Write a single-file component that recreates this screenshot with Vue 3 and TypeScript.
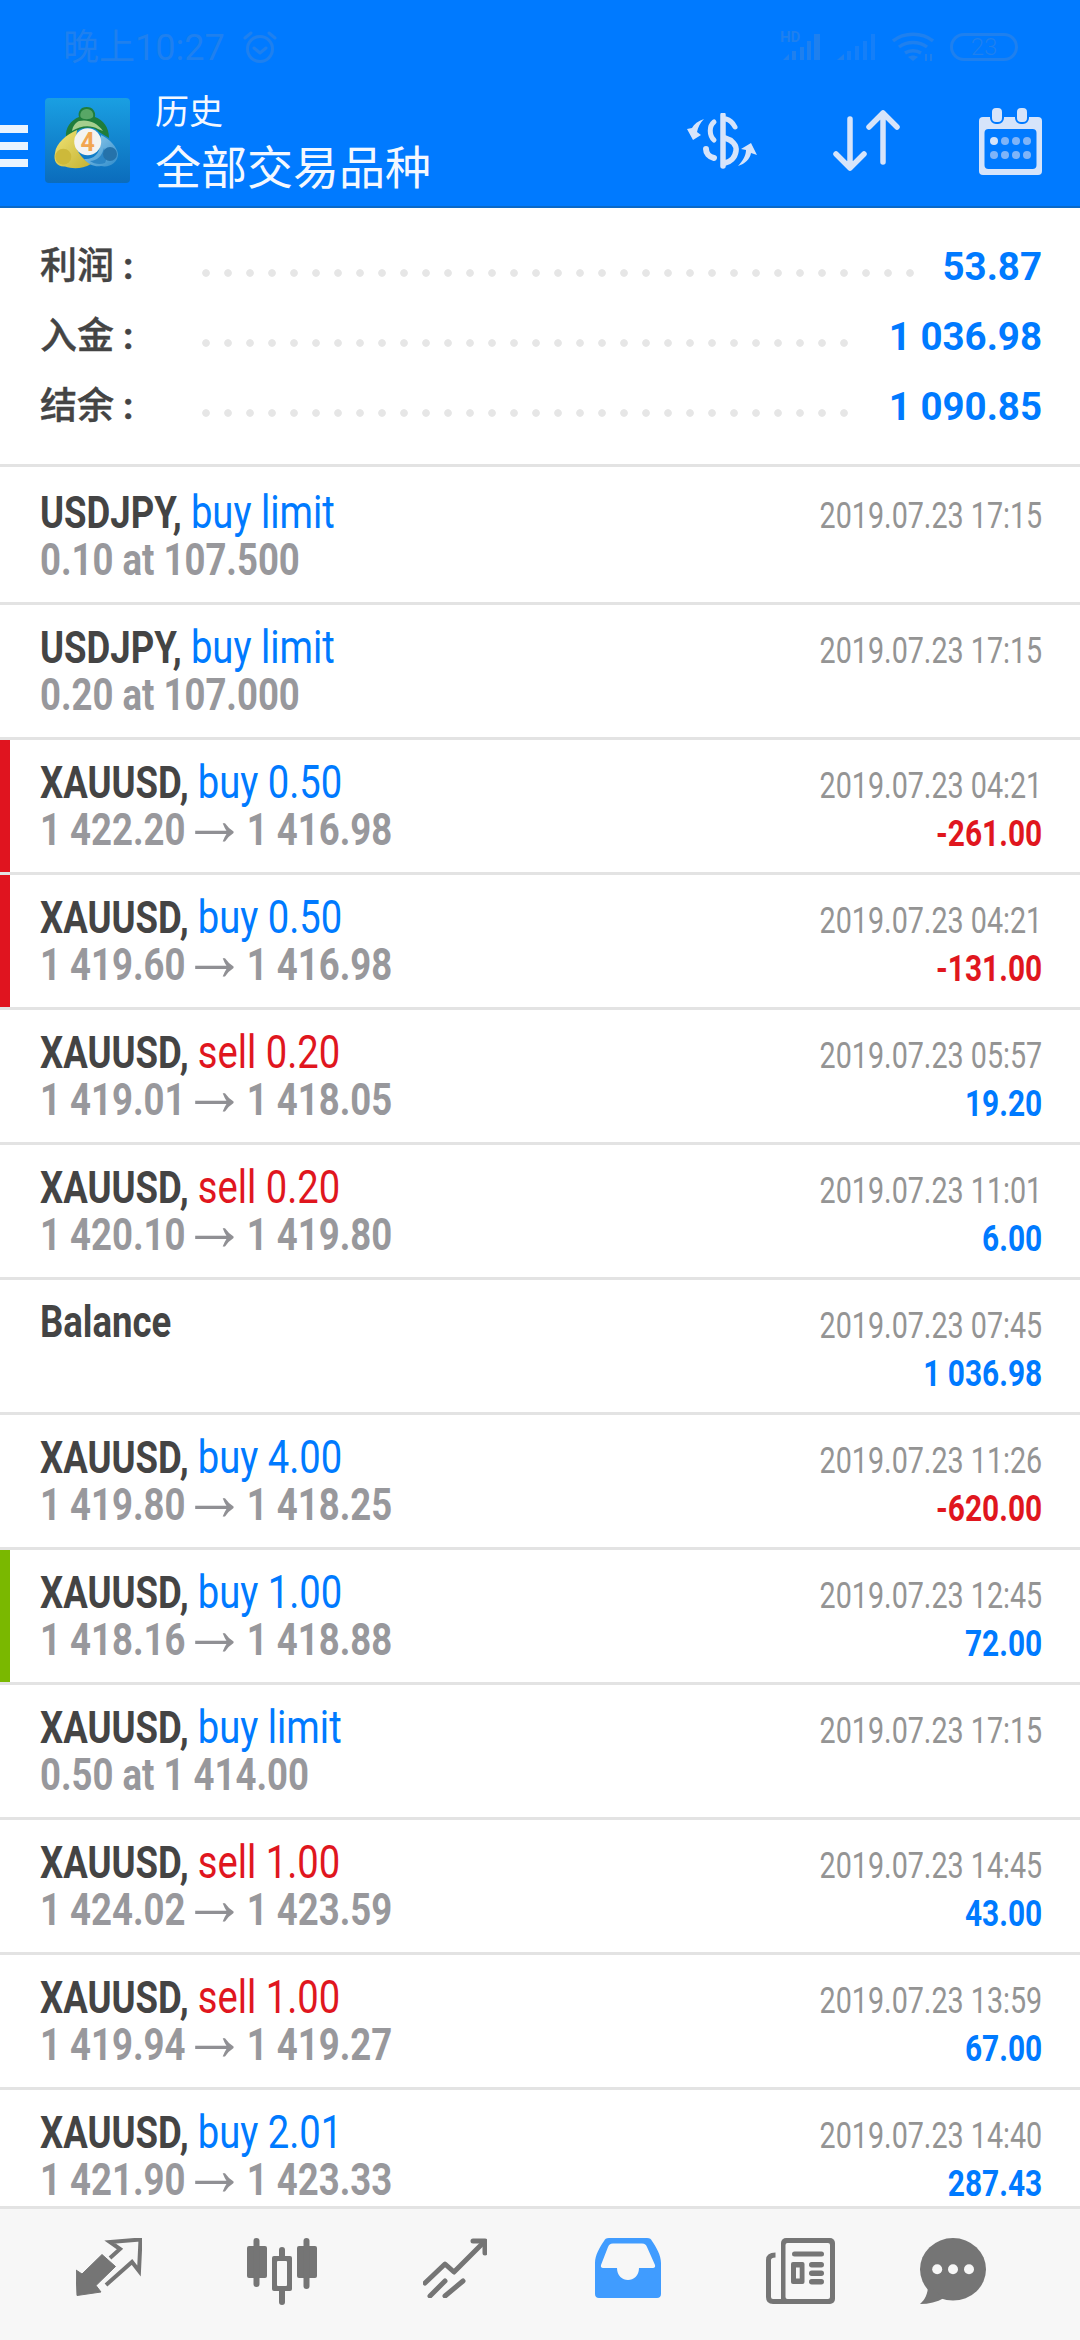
<script setup lang="ts">
interface Row {
  name: string;
  action?: string;
  kind?: 'buy' | 'sell';
  from?: string;
  to?: string;
  sub?: string;
  date: string;
  profit?: string;
  bar?: 'red' | 'green';
}

const summary = [
  { label: '利润', value: '53.87', dots: 33 },
  { label: '入金', value: '1 036.98', dots: 30 },
  { label: '结余', value: '1 090.85', dots: 30 },
];

const rows: Row[] = [
  { name: 'USDJPY', action: 'buy limit', kind: 'buy', sub: '0.10 at 107.500', date: '2019.07.23 17:15' },
  { name: 'USDJPY', action: 'buy limit', kind: 'buy', sub: '0.20 at 107.000', date: '2019.07.23 17:15' },
  { name: 'XAUUSD', action: 'buy 0.50', kind: 'buy', from: '1 422.20', to: '1 416.98', date: '2019.07.23 04:21', profit: '-261.00', bar: 'red' },
  { name: 'XAUUSD', action: 'buy 0.50', kind: 'buy', from: '1 419.60', to: '1 416.98', date: '2019.07.23 04:21', profit: '-131.00', bar: 'red' },
  { name: 'XAUUSD', action: 'sell 0.20', kind: 'sell', from: '1 419.01', to: '1 418.05', date: '2019.07.23 05:57', profit: '19.20' },
  { name: 'XAUUSD', action: 'sell 0.20', kind: 'sell', from: '1 420.10', to: '1 419.80', date: '2019.07.23 11:01', profit: '6.00' },
  { name: 'Balance', date: '2019.07.23 07:45', profit: '1 036.98' },
  { name: 'XAUUSD', action: 'buy 4.00', kind: 'buy', from: '1 419.80', to: '1 418.25', date: '2019.07.23 11:26', profit: '-620.00' },
  { name: 'XAUUSD', action: 'buy 1.00', kind: 'buy', from: '1 418.16', to: '1 418.88', date: '2019.07.23 12:45', profit: '72.00', bar: 'green' },
  { name: 'XAUUSD', action: 'buy limit', kind: 'buy', sub: '0.50 at 1 414.00', date: '2019.07.23 17:15' },
  { name: 'XAUUSD', action: 'sell 1.00', kind: 'sell', from: '1 424.02', to: '1 423.59', date: '2019.07.23 14:45', profit: '43.00' },
  { name: 'XAUUSD', action: 'sell 1.00', kind: 'sell', from: '1 419.94', to: '1 419.27', date: '2019.07.23 13:59', profit: '67.00' },
  { name: 'XAUUSD', action: 'buy 2.01', kind: 'buy', from: '1 421.90', to: '1 423.33', date: '2019.07.23 14:40', profit: '287.43' },
];
</script>

<template>
  <div class="screen">
    <header class="header">
      <div class="status">
        <span class="time">晚上10:27</span>
        <svg class="alarm" width="34" height="34" viewBox="0 0 34 34" fill="none" stroke="#1f80ee" stroke-width="3">
          <circle cx="17" cy="19" r="12.5" />
          <path d="M11 18l6 5 6-5" stroke-linecap="round" stroke-linejoin="round" />
          <path d="M2 8l6-5M32 8l-6-5" stroke-linecap="round" />
        </svg>
        <div class="status-right">
          <svg class="sig1" width="42" height="36" viewBox="0 -6 42 36" fill="#1f80ee">
            <text x="-1" y="10" font-family="Roboto, sans-serif" font-weight="700" font-size="15">HD</text>
            <path d="M2 28l6-6v6zM11 19h4v9h-4zM19 15h4v13h-4zM26 9h4v19h-4zM33 2h6v26h-6z" />
          </svg>
          <svg class="sig2" width="40" height="30" viewBox="0 0 40 30" fill="#157ff8">
            <path d="M0 28l7-6v6z" fill="#1f80ee" />
            <path d="M10 19h4v9h-4zM18 14h4v14h-4zM26 9h4v19h-4zM34 2h4v26h-4z" />
          </svg>
          <svg class="wifi" width="42" height="30" viewBox="0 0 42 30" fill="none" stroke="#1f80ee" stroke-width="3.4">
            <path d="M1 9c11-9 29-9 40 0M7 15c8-6 20-6 28 0M13 21c4.500-3 11.500-3 16 0" />
            <path d="M21 29l-5-4c3-2 7-2 10 0z" fill="#1f80ee" stroke="none" />
            <path d="M34 22v7M39 22v7" stroke-width="2" />
          </svg>
          <div class="battery">23</div>
        </div>
      </div>
      <div class="toolbar">
        <div class="burger"><i></i><i></i><i></i></div>
        <svg class="logo" width="85" height="85" viewBox="0 0 85 85">
          <defs>
            <linearGradient id="lb" x1="0" y1="0" x2="0" y2="1">
              <stop offset="0" stop-color="#1a9fe2" />
              <stop offset="1" stop-color="#0b6cbc" />
            </linearGradient>
            <linearGradient id="ly" x1="0" y1="0" x2="1" y2="1">
              <stop offset="0" stop-color="#f1e476" />
              <stop offset="1" stop-color="#c4b232" />
            </linearGradient>
            <linearGradient id="lc" x1="0" y1="0" x2="1" y2="1">
              <stop offset="0" stop-color="#9ad0ee" />
              <stop offset="1" stop-color="#2f8ccb" />
            </linearGradient>
          </defs>
          <rect width="85" height="85" rx="4" fill="url(#lb)" />
          <path d="M41.700 9C48 9 51 14 50 19C58 22 64 29 64 40L54 34C50 28 34 28 28 36L21 39C20 30 26 22 34 19C32.500 14 35.500 9 41.700 9Z" fill="#1f7d3c" />
          <path d="M41.700 11C46.500 11 49 15 48 19C45 22 38 22 35.500 19C34.500 15 37 11 41.700 11Z" fill="#58a766" />
          <path d="M34 23C42 21 52 24 58 33L53 31C46 27 36 27 27 33C28 28 30 25 34 23Z" fill="#a5cf8e" />
          <path d="M32 32C21 37 11 45 10 55C8 63 12 69 20 68.500C28 71 37 71 46 66C38 62 32 54 30 46Z" fill="url(#ly)" />
          <circle cx="18.300" cy="58.700" r="8" fill="#cdb93a" />
          <path d="M56 37C65 41 72 49 73 56C73 65 64 70 56 68C50 69 44 67 39 61C48 62 54 56 55 48Z" fill="url(#lc)" />
          <path d="M45 63C52 63 57 58 59 50C61 56 62 62 60 65C55 67 49 66 45 63Z" fill="#2c86c6" />
          <circle cx="65" cy="56" r="7" fill="#2572aa" />
          <circle cx="42.700" cy="43.700" r="13.500" fill="#f3f3f1" />
          <text x="42.700" y="52.500" text-anchor="middle" font-family="Roboto, sans-serif" font-weight="700" font-size="25" fill="#f2a650">4</text>
        </svg>
        <div class="titles">
          <div class="title-small">历史</div>
          <div class="title-big">全部交易品种</div>
        </div>
        <div class="actions">
          <svg class="a-money" width="72" height="56" viewBox="0 0 72 56" fill="#d6e4fa">
            <g fill="none" stroke="#d6e4fa" stroke-linecap="round">
              <path d="M36 2v51" stroke-width="5.500" />
              <path d="M39 6c4 1 7 4 9 8" stroke-width="5" />
              <path d="M27 9c-5 4-5 13 0 18" stroke-width="5" />
              <path d="M38 25C45 27 50 32 49 38C48 45 43 49 38 50" stroke-width="5.500" />
              <path d="M19 36c0 4 3 8 8 9" stroke-width="6" />
            </g>
            <path d="M17 6C11 8 7 11 5 15L0 16L6 27L14 22L10 19C11 14 13 10 17 6Z" />
            <path d="M51 53C56 48 59 42 59 37L54 36L64 30L70 42L64 40C63 46 58 51 51 53Z" />
          </svg>
          <svg class="a-sort" width="72" height="62" viewBox="0 0 72 62" fill="none" stroke="#d6e4fa" stroke-width="5.500" stroke-linecap="round" stroke-linejoin="round">
            <path d="M17 9v49M3 44l14 14 14-14" />
            <path d="M50 3v49M36 17L50 3l14 14" />
          </svg>
          <svg class="a-cal" width="64" height="68" viewBox="0 0 64 68">
            <rect x="0" y="10" width="63" height="58" rx="4" fill="#d6e4fa" />
            <rect x="5.500" y="22" width="52" height="40" rx="4" fill="#007aff" />
            <rect x="12" y="0" width="12" height="16" rx="5" fill="#d6e4fa" stroke="#007aff" stroke-width="2" />
            <rect x="37" y="0" width="12" height="16" rx="5" fill="#d6e4fa" stroke="#007aff" stroke-width="2" />
            <circle cx="15" cy="34" r="4" fill="#d6e4fa" />
            <g fill="#7fb4f8">
              <circle cx="26" cy="34" r="4" /><circle cx="37" cy="34" r="4" /><circle cx="48" cy="34" r="4" />
              <circle cx="15" cy="48" r="4" /><circle cx="26" cy="48" r="4" /><circle cx="37" cy="48" r="4" /><circle cx="48" cy="48" r="4" />
            </g>
          </svg>
        </div>
      </div>
    </header>

    <section class="summary">
      <div v-for="s in summary" :key="s.label" class="sum-row">
        <span class="sum-label">{{ s.label }}<span class="colon">:</span></span>
        <span class="sum-dots" :style="{ width: s.dots * 22 + 'px' }"></span>
        <span class="sum-value">{{ s.value }}</span>
      </div>
    </section>

    <main class="list">
      <div
        v-for="(r, i) in rows"
        :key="i"
        class="row"
        :class="[r.bar ? 'bar-' + r.bar : '', i === 0 ? 'first' : '']"
      >
        <div class="left">
          <div class="name cond">
            <b>{{ r.name }}<template v-if="r.action">,</template></b>
            <template v-if="r.action">&nbsp;<span class="action" :class="r.kind">{{ r.action }}</span></template>
          </div>
          <div v-if="r.sub" class="sub cond">{{ r.sub }}</div>
          <div v-else-if="r.from" class="sub cond">{{ r.from }}<span class="arrow">→</span>{{ r.to }}</div>
        </div>
        <div class="right">
          <div class="date condr">{{ r.date }}</div>
          <div v-if="r.profit" class="profit condr" :class="{ neg: r.profit.startsWith('-') }">{{ r.profit }}</div>
        </div>
      </div>
    </main>

    <nav class="nav">
      <svg width="66" height="58" viewBox="0 0 66 58" fill="#757575">
        <path d="M26 16.500L39.500 28.500L20 47.500L25 54L1 57.500L0 32L6 36Z" stroke="#757575" stroke-width="1" stroke-linejoin="round" />
        <path d="M34 20L44 11L34 4L64.500 1.500L63 33L56 24L30 47" fill="none" stroke="#757575" stroke-width="4" />
      </svg>
      <svg width="70" height="68" viewBox="0 0 70 68" fill="#757575">
        <rect x="0" y="8" width="20" height="32" rx="2" />
        <rect x="6.500" y="0" width="6" height="49" rx="3" />
        <rect x="50" y="8" width="20" height="32" rx="2" />
        <rect x="56.500" y="0" width="6" height="51" rx="3" />
        <rect x="25" y="18" width="20" height="35" rx="2" />
        <rect x="32" y="9" width="6" height="58" rx="3" />
        <rect x="30" y="23" width="10" height="25" rx="1" fill="#f7f7f7" />
      </svg>
      <svg width="64" height="60" viewBox="0 0 64 60" fill="none" stroke="#757575" stroke-width="5" stroke-linecap="round" stroke-linejoin="round">
        <path d="M2 45L22 26L31 34L61 4" />
        <path d="M50 3H62V15" />
        <path d="M7 58L22 43M22 58L40 43" />
      </svg>
      <svg width="66" height="60" viewBox="0 0 66 60">
        <path d="M14 0H52C55 0 56 1 57 3C61 9 66 17 66 25V56C66 58.500 64.500 60 62 60H4C1.500 60 0 58.500 0 56V25C0 17 5 9 9 3C10 1 11 0 14 0Z" fill="#409cff" />
        <path d="M18 5.500H47C50 5.500 51 7 52 9L60 27C60.500 29 59.500 30 58 30H44C44 46 22 46 22 30H8C6.500 30 5.500 29 6 27L13 9C14 7 15 5.500 18 5.500Z" fill="#f7f7f7" />
      </svg>
      <svg width="69" height="66" viewBox="0 0 69 66">
        <rect x="15" y="0" width="54" height="66" rx="5" fill="#757575" />
        <rect x="19.500" y="5" width="44.500" height="56" rx="2" fill="#f7f7f7" />
        <path d="M9.500 17Q2.500 17 2.500 22V59Q2.500 63.500 7 63.500H20" fill="none" stroke="#757575" stroke-width="5" />
        <g fill="#757575">
          <rect x="26" y="13.500" width="32" height="5" rx="2.500" />
          <rect x="25" y="24" width="13.500" height="22" rx="2" />
          <rect x="43" y="24" width="15" height="5.500" rx="2.700" />
          <rect x="43" y="32.500" width="15" height="5.500" rx="2.700" />
          <rect x="43" y="41" width="15" height="5.500" rx="2.700" />
        </g>
        <rect x="30" y="29.500" width="3.700" height="11" fill="#f7f7f7" />
      </svg>
      <svg width="66" height="66" viewBox="0 0 66 66">
        <ellipse cx="33" cy="31.300" rx="33" ry="31.300" fill="#757575" />
        <path d="M8 48C8 55 5 62 0 66C9 66 17 64 24 60Z" fill="#757575" />
        <g fill="#f7f7f7">
          <circle cx="17.200" cy="31.300" r="5" /><circle cx="33" cy="31.300" r="5" /><circle cx="49" cy="31.300" r="5" />
        </g>
      </svg>
    </nav>
  </div>
</template>

<style scoped>
.screen {
  width: 1080px;
  height: 2340px;
  display: flex;
  flex-direction: column;
  overflow: hidden;
  background: #fff;
  font-family: Roboto, "Noto Sans CJK SC", sans-serif;
}
.header {
  height: 208px;
  flex: none;
  box-sizing: border-box;
  background: #007aff;
  border-bottom: 2px solid #0a69c8;
}
.status {
  height: 66px;
  padding: 30px 63px 0;
  box-sizing: border-box;
  display: flex;
  align-items: flex-start;
  color: #1f80ee;
}
.time {
  font-size: 36px;
  line-height: 36px;
}
.alarm {
  margin-left: 18px;
}
.status-right {
  margin-left: auto;
  margin-right: -1px;
  display: flex;
  align-items: center;
  margin-top: 2px;
}
.sig1 {
  margin-top: -6px;
}
.sig2 {
  margin-left: 14px;
}
.wifi {
  margin-left: 15px;
}
.battery {
  margin-left: 16px;
  width: 68px;
  height: 28px;
  box-sizing: border-box;
  border: 3px solid #1f80ee;
  border-radius: 14px;
  text-align: center;
  font-size: 24px;
  font-weight: 300;
  line-height: 22px;
}
.toolbar {
  height: 140px;
  display: flex;
  align-items: center;
  padding-bottom: 8px;
  box-sizing: border-box;
}
.burger {
  width: 28px;
  display: flex;
  flex-direction: column;
  gap: 9px;
  margin-right: 17px;
  margin-top: 28px;
}
.burger i {
  display: block;
  height: 8px;
  background: #eaf4ff;
}
.logo {
  flex: none;
  margin-top: 17px;
}
.titles {
  margin-left: 25px;
  color: #f4f8ff;
  margin-top: 25px;
}
.title-small {
  font-size: 34px;
  line-height: 38px;
}
.title-big {
  font-size: 46px;
  line-height: 58px;
  margin-top: 8px;
}
.actions {
  margin-left: auto;
  padding-right: 37px;
  display: flex;
  align-items: center;
  margin-top: 17px;
}
.a-sort {
  margin-left: 74.500px;
}
.a-cal {
  margin-left: 74px;
}
.summary {
  height: 259px;
  flex: none;
  box-sizing: border-box;
  padding: 22px 38px 0 40px;
  border-bottom: 3px solid #e3e3e3;
}
.sum-row {
  height: 70px;
  display: flex;
  align-items: center;
}
.sum-label {
  font-size: 37px;
  font-weight: 500;
  color: #444;
  width: 155px;
  flex: none;
  margin-top: -4px;
  -webkit-text-stroke: 0.4px #444;
}
.colon {
  font-weight: 700;
  margin-left: 9px;
}
.sum-dots {
  height: 22px;
  margin-top: 16px;
  background: radial-gradient(circle at 11px 11px, #e6e6e6 3.4px, transparent 4.2px) 0 0 / 22px 22px repeat-x;
}
.sum-value {
  margin-left: auto;
  margin-top: 2px;
  font-size: 38.500px;
  font-weight: 700;
  color: #007aff;
}
.list {
  flex: 1;
  min-height: 0;
  overflow: hidden;
}
.row {
  height: 135px;
  box-sizing: border-box;
  border-bottom: 3px solid #e3e3e3;
  padding: 19px 38px 0 40px;
  display: flex;
  justify-content: space-between;
}
.row.first {
  height: 138px;
  padding-top: 22px;
}
.bar-red {
  box-shadow: inset 10px 0 0 #e0141f;
}
.bar-green {
  box-shadow: inset 10px 0 0 #7ab800;
}
.cond {
  transform-origin: left center;
  white-space: nowrap;
}
.condr {
  transform-origin: right center;
  white-space: nowrap;
  text-align: right;
}
.name {
  font-size: 44px;
  line-height: 47px;
  color: #444;
  transform: scaleX(0.83);
}
.name b {
  font-weight: 700;
}
.action {
  font-size: 46px;
}
.buy {
  color: #007aff;
}
.sell {
  color: #e0161e;
}
.sub {
  font-size: 44px;
  line-height: 47px;
  font-weight: 700;
  color: #98989c;
  transform: scaleX(0.83);
}
.arrow {
  font-family: "Liberation Sans", sans-serif;
  font-weight: 400;
  font-size: 78px;
  line-height: 0;
  margin-left: -4px;
  color: #909094;
}
.right {
  padding-top: 3px;
}
.date {
  font-size: 37px;
  line-height: 48px;
  color: #949494;
  transform: scaleX(0.775);
}
.profit {
  font-size: 36px;
  line-height: 48px;
  font-weight: 700;
  color: #007aff;
  transform: scaleX(0.83);
}
.profit.neg {
  color: #e0161e;
}
.nav {
  height: 134px;
  flex: none;
  box-sizing: border-box;
  border-top: 3px solid #e3e3e3;
  background: #f7f7f7;
  padding: 29px 0 0 22px;
  display: grid;
  grid-template-columns: 173px 173px 173px 173px 172px 134px;
  align-items: start;
  justify-items: center;
}
</style>
